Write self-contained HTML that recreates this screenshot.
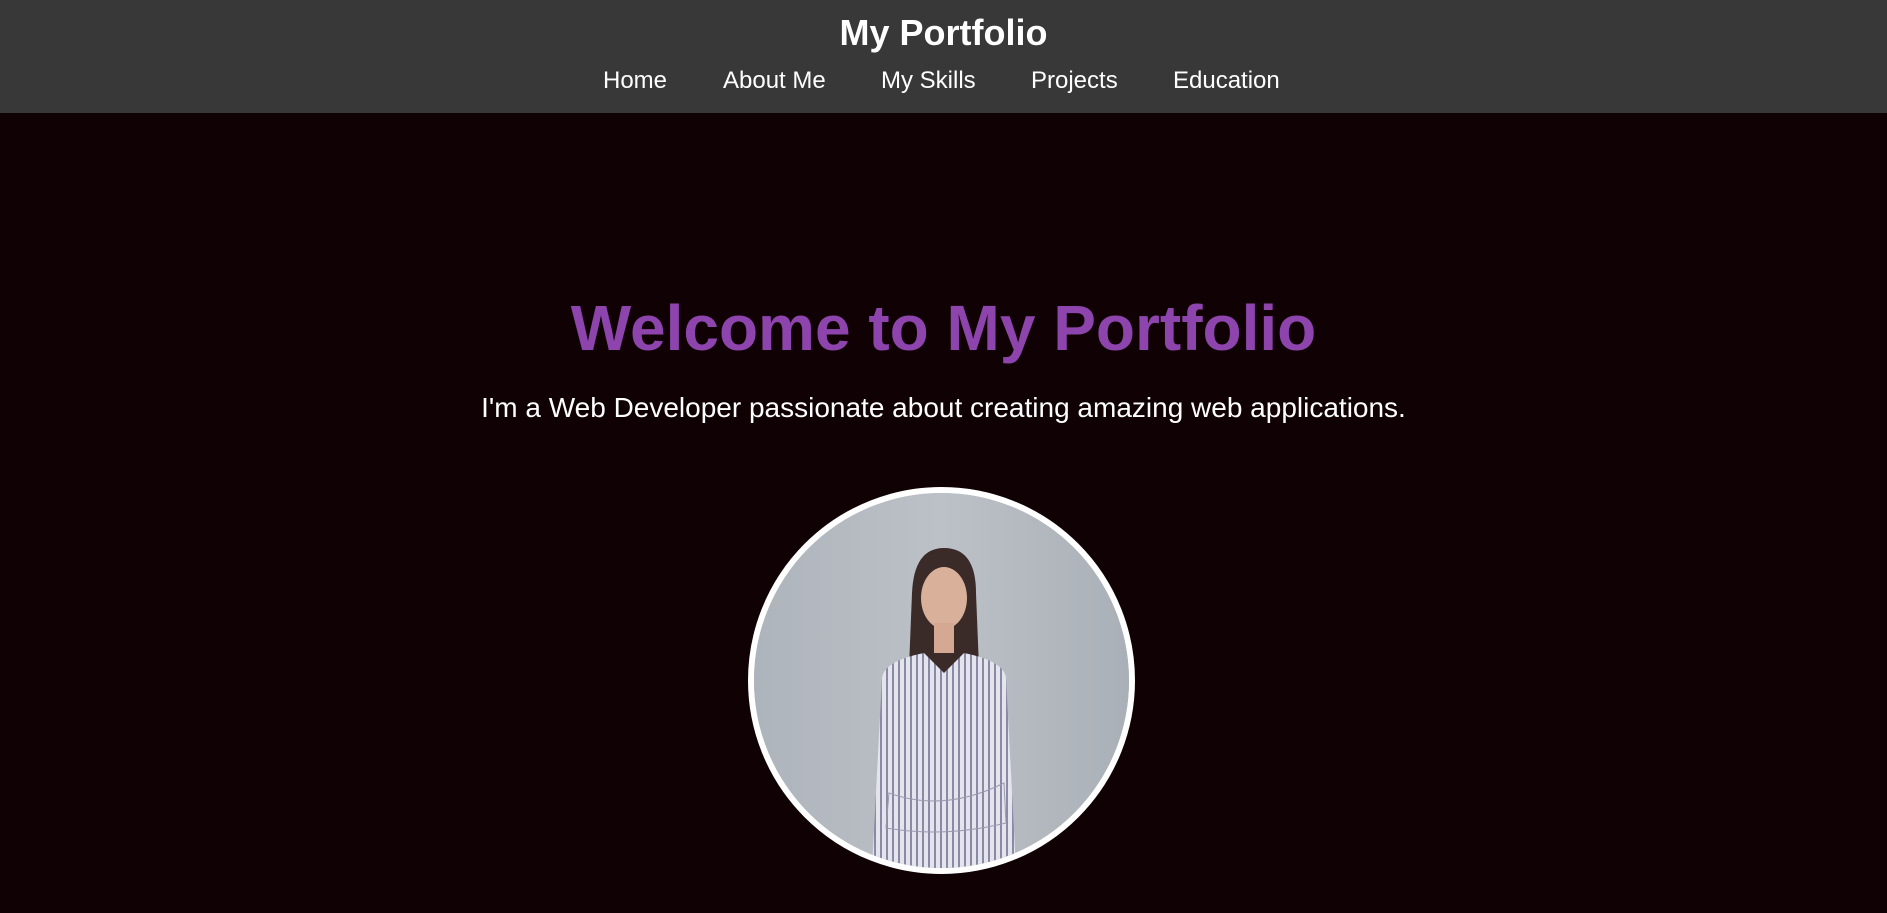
<!DOCTYPE html>
<html><head><meta charset="utf-8"><style>
*{margin:0;padding:0;box-sizing:border-box}
body{width:1887px;height:913px;overflow:hidden;background:#100204;font-family:"Liberation Sans",Arial,sans-serif;color:#fff;position:relative}
header{position:absolute;left:0;top:0;width:1887px;height:113px;background:#383838}
.t{position:absolute;left:0;width:100%;top:12px;text-align:center;font-weight:bold;font-size:36px;line-height:42px}
.n{position:absolute;top:67px;font-size:24px;line-height:28px;white-space:nowrap}
h1{position:absolute;left:0;width:100%;top:290px;text-align:center;font-size:64px;line-height:76px;color:#8e44ad;font-weight:bold}
p{position:absolute;left:0;width:100%;top:392px;text-align:center;font-size:28px;line-height:32px}
.c{position:absolute;left:748px;top:487px;width:387px;height:387px;border-radius:50%;border:6px solid #fff;overflow:hidden;background:#b3b8bf}
</style></head><body>
<header>
<div class="t">My Portfolio</div>
<span class="n" style="left:603px">Home</span>
<span class="n" style="left:723px">About Me</span>
<span class="n" style="left:881px">My Skills</span>
<span class="n" style="left:1031px">Projects</span>
<span class="n" style="left:1173px">Education</span>
</header>
<h1>Welcome to My Portfolio</h1>
<p>I'm a Web Developer passionate about creating amazing web applications.</p>
<div class="c">
<svg width="375" height="375" viewBox="0 0 375 375">
<defs><linearGradient id="g" x1="0" x2="1"><stop offset="0" stop-color="#aeb4bb"/><stop offset=".5" stop-color="#bcc1c7"/><stop offset="1" stop-color="#aab0b7"/></linearGradient>
<pattern id="s" width="6" height="6" patternUnits="userSpaceOnUse"><rect width="6" height="6" fill="#e4e4ec"/><rect width="2" height="6" fill="#8a8aa6"/></pattern></defs>
<rect width="375" height="375" fill="url(#g)"/>
<path d="M158 100 Q160 55 190 55 Q222 55 222 100 L226 200 L154 200 Z" fill="#3a2a28"/>
<ellipse cx="190" cy="105" rx="23" ry="31" fill="#d9b09a"/>
<rect x="180" y="130" width="20" height="30" fill="#d4a892"/>
<path d="M128 185 Q130 168 170 160 L190 180 L210 160 Q250 168 252 185 L262 375 L118 375 Z" fill="url(#s)"/>
<path d="M135 300 Q190 320 250 290 L252 330 Q190 345 132 335 Z" fill="url(#s)" stroke="#9a9ab0" stroke-width="1"/>
</svg>
</div>
</body></html>
